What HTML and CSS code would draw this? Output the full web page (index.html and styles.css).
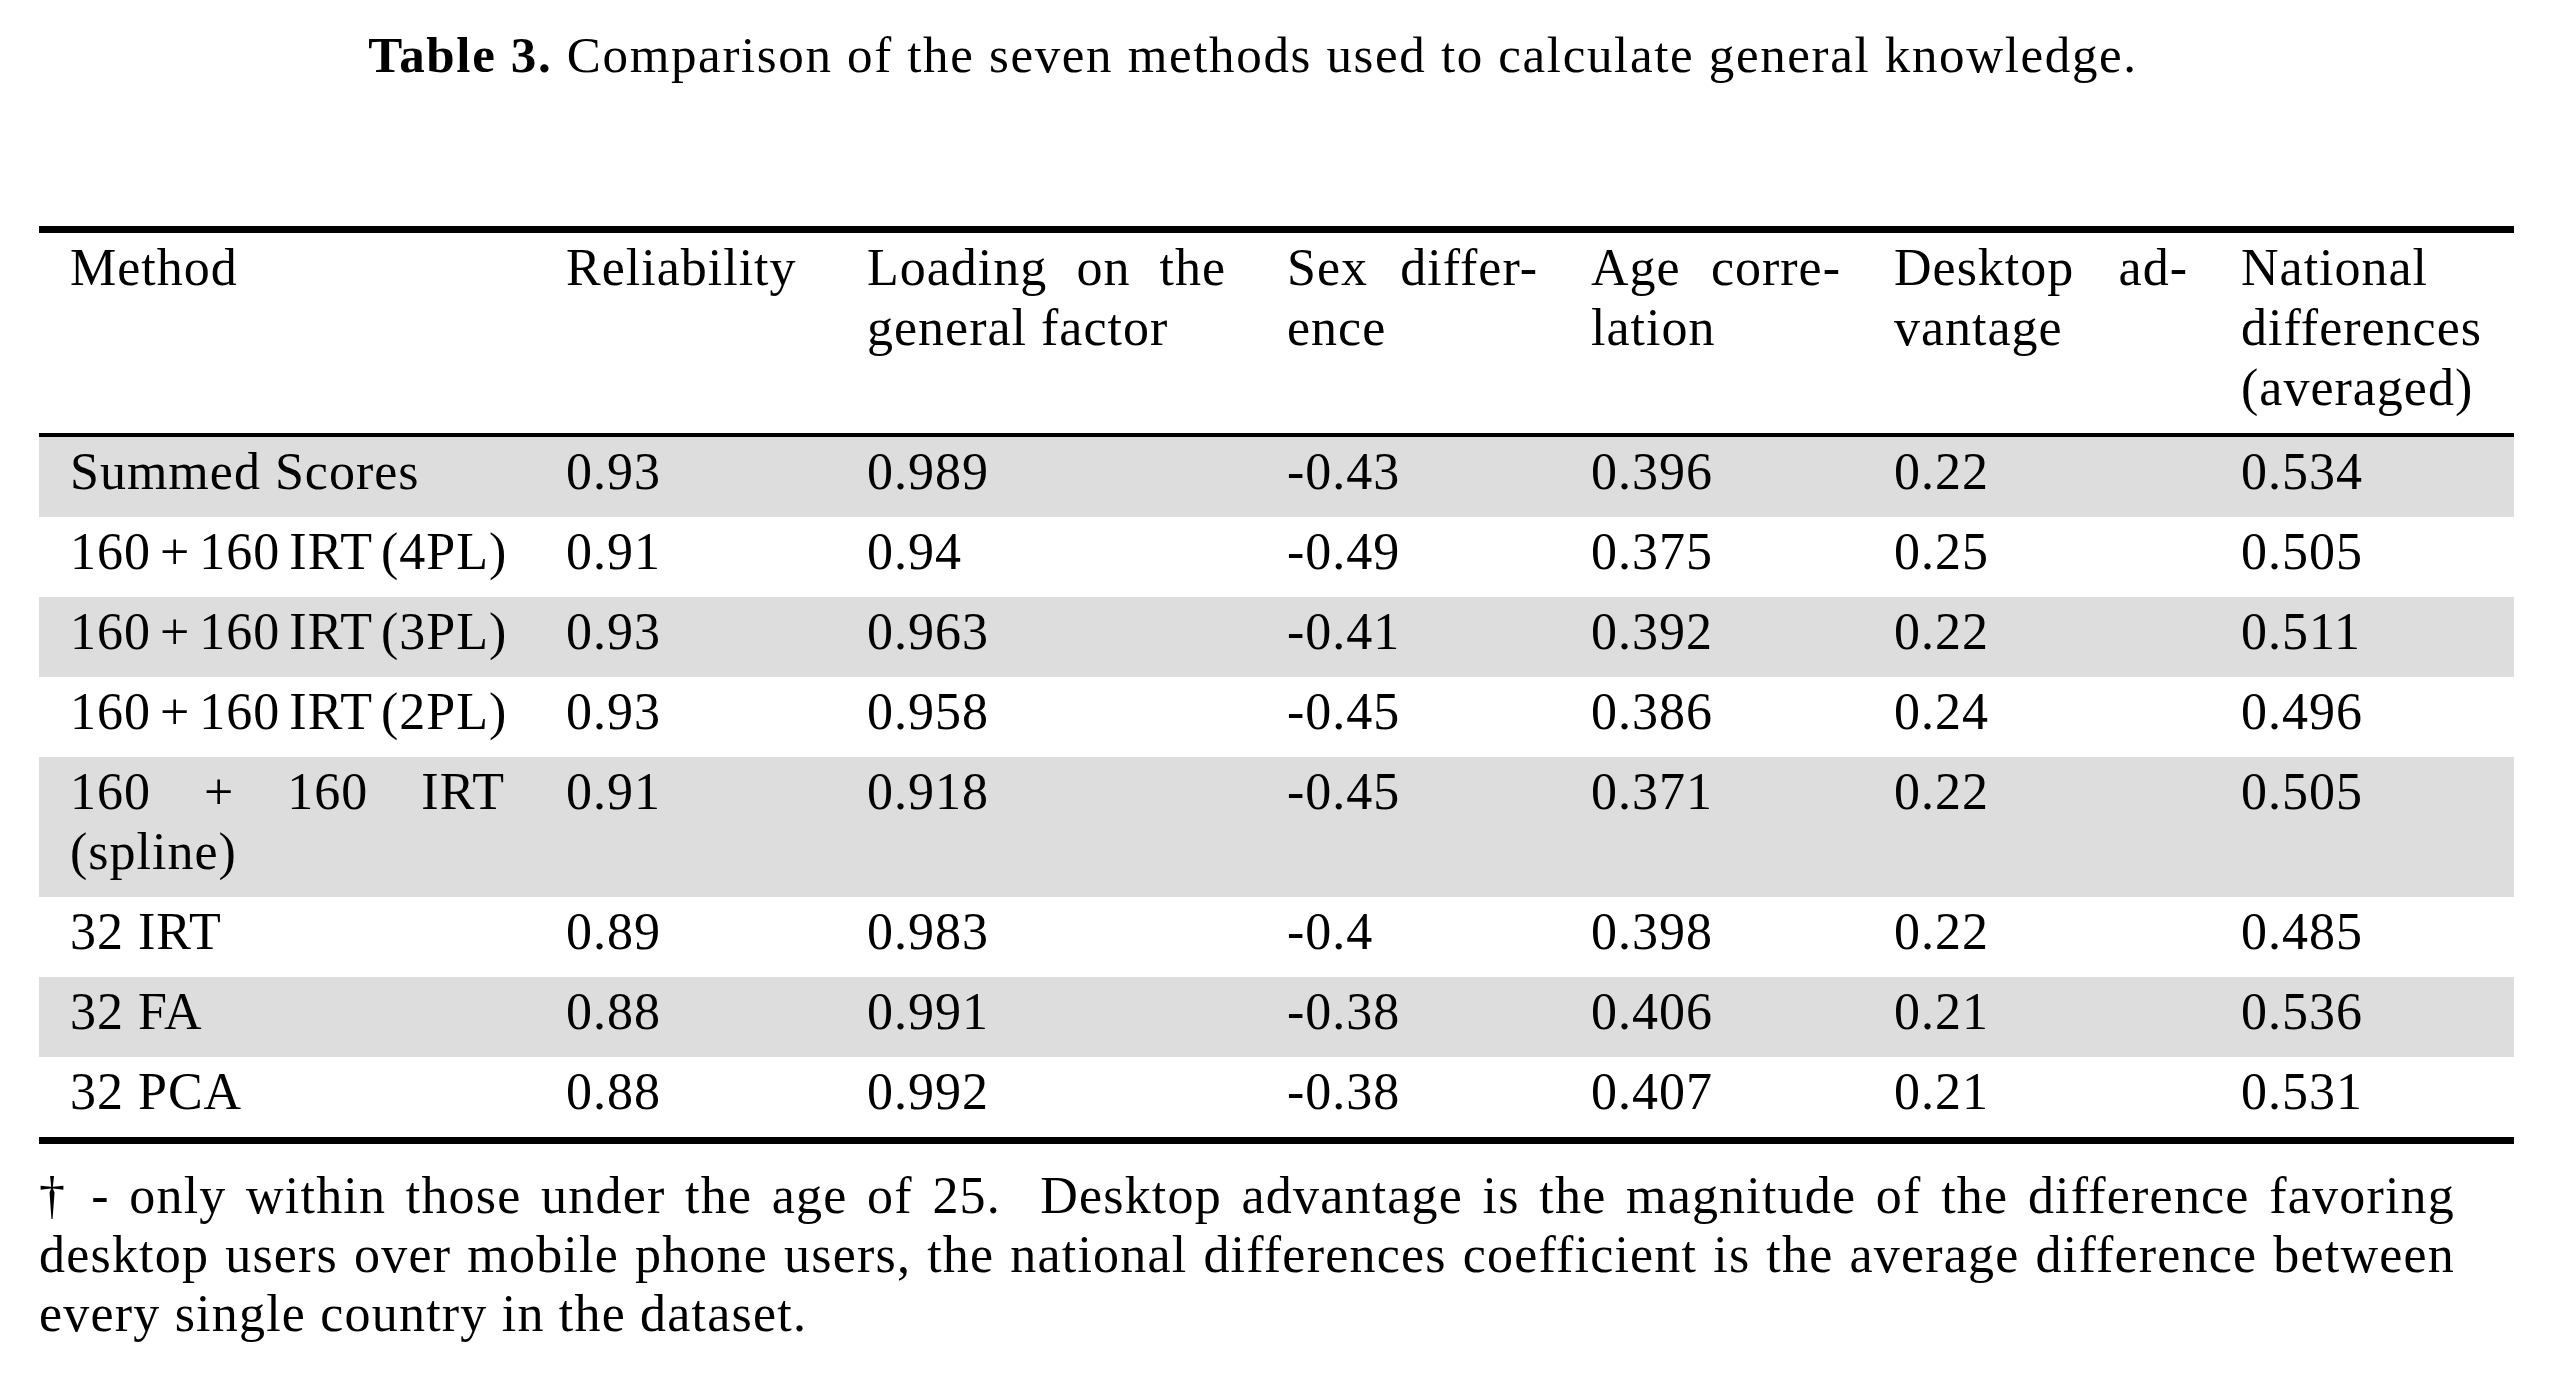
FILE: index.html
```html
<!DOCTYPE html>
<html lang="en">
<head>
<meta charset="utf-8">
<title>Table 3</title>
<link rel="stylesheet" href="styles.css">
</head>
<body>
<div class="page">
  <p class="caption"><b>Table 3.</b> Comparison of the seven methods used to calculate general knowledge.</p>
  <table class="results">
    <colgroup>
      <col class="c-method">
      <col class="c-rel">
      <col class="c-load">
      <col class="c-sex">
      <col class="c-age">
      <col class="c-desk">
      <col class="c-nat">
    </colgroup>
    <thead>
      <tr>
        <th>Method</th>
        <th>Reliability</th>
        <th><span class="jl">Loading on the</span><span class="ln">general factor</span></th>
        <th class="hy"><span class="jl">Sex differ-</span><span class="ln">ence</span></th>
        <th class="hy"><span class="jl">Age corre-</span><span class="ln">lation</span></th>
        <th class="hy"><span class="jl">Desktop ad-</span><span class="ln">vantage</span></th>
        <th><span class="ln">National</span><span class="ln">differences</span><span class="ln">(averaged)</span></th>
      </tr>
    </thead>
    <tbody>
      <tr class="shade">
        <td>Summed Scores</td><td>0.93</td><td>0.989</td><td>-0.43</td><td>0.396</td><td>0.22</td><td>0.534</td>
      </tr>
      <tr>
        <td class="nw">160 + 160 IRT (4PL)</td><td>0.91</td><td>0.94</td><td>-0.49</td><td>0.375</td><td>0.25</td><td>0.505</td>
      </tr>
      <tr class="shade">
        <td class="nw">160 + 160 IRT (3PL)</td><td>0.93</td><td>0.963</td><td>-0.41</td><td>0.392</td><td>0.22</td><td>0.511</td>
      </tr>
      <tr>
        <td class="nw">160 + 160 IRT (2PL)</td><td>0.93</td><td>0.958</td><td>-0.45</td><td>0.386</td><td>0.24</td><td>0.496</td>
      </tr>
      <tr class="shade">
        <td><span class="jl">160 + 160 IRT</span><span class="ln">(spline)</span></td><td>0.91</td><td>0.918</td><td>-0.45</td><td>0.371</td><td>0.22</td><td>0.505</td>
      </tr>
      <tr>
        <td>32 IRT</td><td>0.89</td><td>0.983</td><td>-0.4</td><td>0.398</td><td>0.22</td><td>0.485</td>
      </tr>
      <tr class="shade">
        <td>32 FA</td><td>0.88</td><td>0.991</td><td>-0.38</td><td>0.406</td><td>0.21</td><td>0.536</td>
      </tr>
      <tr class="last">
        <td>32 PCA</td><td>0.88</td><td>0.992</td><td>-0.38</td><td>0.407</td><td>0.21</td><td>0.531</td>
      </tr>
    </tbody>
  </table>
  <div class="note">
    <span class="jl">† - only within those under the age of 25.&nbsp; Desktop advantage is the magnitude of the difference favoring</span>
    <span class="jl">desktop users over mobile phone users, the national differences coefficient is the average difference between</span>
    <span class="ln">every single country in the dataset.</span>
  </div>
</div>
</body>
</html>
```

FILE: styles.css
```css
html, body {
  margin: 0;
  padding: 0;
  background: #ffffff;
}

body {
  font-family: "Liberation Serif", "Times New Roman", serif;
  font-size: 52px;
  line-height: 60px;
  letter-spacing: 1px;
  color: #000000;
}

.page {
  width: 2416px;
  padding-left: 39px;
}

.caption {
  margin: 25px 0 0 0;
  padding-left: 12px;
  font-size: 51px;
  line-height: 60px;
  letter-spacing: 1.65px;
  text-align: center;
}

.caption b {
  font-weight: bold;
}

.results {
  margin-top: 141px;
  width: 2475px;
  table-layout: fixed;
  border-collapse: separate;
  border-spacing: 0;
}

.c-method { width: 496px; }
.c-rel { width: 301px; }
.c-load { width: 420px; }
.c-sex { width: 304px; }
.c-age { width: 303px; }
.c-desk { width: 347px; }
.c-nat { width: 304px; }

.results th,
.results td {
  text-align: left;
  vertical-align: top;
  font-weight: normal;
  padding: 5px 30px 15px 31px;
  line-height: 60px;
}

.results th {
  border-top: 7px solid #000000;
  border-bottom: 4px solid #000000;
}

.results th.hy {
  padding-right: 22px;
}

.results tr.shade td {
  background: #dddddd;
}

.results tr.last td {
  border-bottom: 7px solid #000000;
}

.results td.nw {
  white-space: nowrap;
  word-spacing: -5px;
}

.jl {
  display: block;
  text-align: justify;
  text-align-last: justify;
}

.ln {
  display: block;
}

.note {
  margin-top: 22px;
  line-height: 59px;
  letter-spacing: 1.2px;
}
```
